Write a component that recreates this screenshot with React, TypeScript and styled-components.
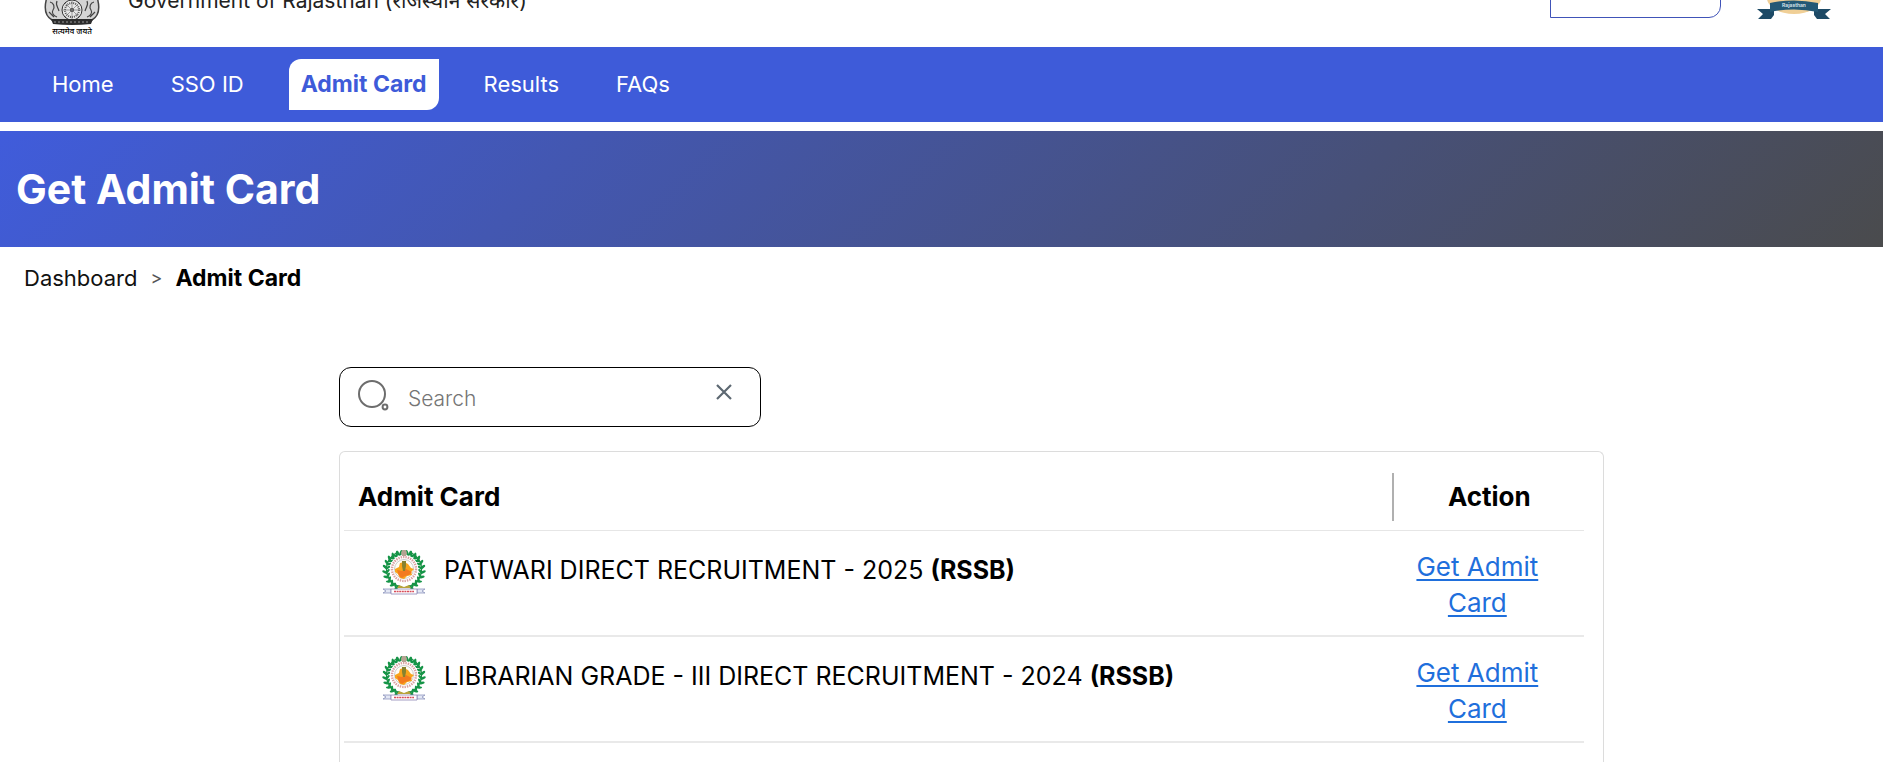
import React, { useState } from 'react';
import styled, { createGlobalStyle, css } from 'styled-components';

const GlobalStyle = createGlobalStyle`
  *, *::before, *::after { box-sizing: border-box; }
  body { margin: 0; background: #fff; color: #000; font-family: Inter, "Noto Sans", sans-serif; }
`;

const Page = styled.div`
  display: flex;
  flex-direction: column;
  height: 100vh;
  overflow: hidden;
`;

const Header = styled.header`
  display: flex;
  align-items: flex-end;
  flex: none;
  height: 47px;
  padding: 0 52px 0 44px;
  overflow: hidden;
`;

const Emblem = styled.div`
  display: flex;
  flex-direction: column;
  align-items: center;
  width: 56px;
  padding-bottom: 10px;
  svg { display: block; }
`;

const Motto = styled.span`
  font-family: "Noto Sans", "Liberation Serif", serif;
  font-size: 8px;
  font-weight: 500;
  line-height: 12px;
  white-space: nowrap;
`;

const Government = styled.span`
  margin-left: 28px;
  padding-bottom: 32px;
  color: #222;
  font-size: 21px;
  line-height: 28px;
  white-space: nowrap;
`;

const HeaderButton = styled.button`
  width: 171px;
  height: 52px;
  margin: 0 36px 29px auto;
  border: 1px solid #4053b8;
  border-radius: 12px 0;
  background: #fff;
`;

const StateLogo = styled.svg`
  display: block;
  flex: none;
  margin-bottom: 28px;
`;

const Nav = styled.nav`
  display: flex;
  align-items: center;
  flex: none;
  gap: 33px;
  height: 75px;
  padding: 0 40px;
  background: #3e5bd9;
`;

const NavLink = styled.a<{ $active?: boolean }>`
  padding: 0 12px;
  border-radius: 12px 0;
  color: #fff;
  font-size: 22px;
  line-height: 51px;
  text-decoration: none;
  white-space: nowrap;
  ${(p) => p.$active && css`
    background: #fff;
    color: #3e5bd9;
    font-size: 23px;
    font-weight: 700;
  `}
`;

const Banner = styled.section`
  display: flex;
  align-items: center;
  flex: none;
  height: 116px;
  margin-top: 9px;
  padding: 0 16px;
  background: linear-gradient(135deg, #405cdb, #4a4b4d);
`;

const Title = styled.h1`
  margin: 0;
  color: #fff;
  font-size: 41px;
  line-height: 48px;
`;

const Breadcrumb = styled.nav`
  display: flex;
  align-items: center;
  flex: none;
  gap: 13px;
  padding: 16px 24px;
  font-size: 23px;
  line-height: 30px;
  a { color: #111; font-size: 22px; text-decoration: none; }
  span { color: #555; font-size: 18px; }
`;

const Content = styled.main`
  display: flex;
  flex-direction: column;
  flex: 1;
  margin: 58px 14.8% 0 18%;
`;

const SearchBox = styled.div`
  display: flex;
  align-items: center;
  flex: none;
  width: 422px;
  height: 60px;
  padding: 0 24px 0 18px;
  border: 1px solid #000;
  border-radius: 12px;
`;

const SearchInput = styled.input`
  flex: 1;
  min-width: 0;
  margin-left: 18px;
  padding: 2px 0 0;
  border: 0;
  outline: 0;
  background: none;
  font-family: inherit;
  font-size: 21px;
  font-weight: 300;
  &::placeholder { color: #757575; opacity: 1; }
`;

const ClearButton = styled.button`
  padding: 4px;
  margin-bottom: 10px;
  border: 0;
  background: none;
  svg { display: block; }
`;

const Card = styled.section`
  flex: 1;
  margin-top: 24px;
  padding: 21px 19px 0 4px;
  border: 1px solid #dcdcdc;
  border-bottom: 0;
  border-radius: 6px 6px 0 0;
`;

const Table = styled.table`
  width: 100%;
  border-collapse: separate;
  border-spacing: 0;
  font-size: 25px;
`;

const HeadCell = styled.th<{ $action?: boolean }>`
  width: ${(p) => (p.$action ? '192px' : 'auto')};
  padding: 0 0 9px;
  border-bottom: 1px solid #e6e6e6;
  font-size: 26px;
  text-align: left;
`;

const HeadLabel = styled.div<{ $divided?: boolean }>`
  height: 48px;
  padding-left: 14px;
  line-height: 48px;
  ${(p) => p.$divided && css`
    padding-left: 0;
    border-left: 2px solid #b0b0b0;
    text-align: center;
  `}
`;

const Cell = styled.td`
  height: 106px;
  padding: 18px 0 0 38px;
  border-bottom: 2px solid #e9e9e9;
  vertical-align: top;
`;

const ActionCell = styled(Cell)`
  padding: 18px 42px 0 20px;
  font-size: 26px;
  line-height: 36px;
  text-align: center;
  a {
    color: #1f6fdc;
    text-decoration-thickness: 2px;
    text-underline-offset: 3px;
  }
`;

const Exam = styled.div`
  display: flex;
  align-items: flex-start;
  gap: 18px;
  line-height: 42px;
  svg { display: block; flex: none; }
`;

const NationalEmblem = () => (
  <svg width="56" height="60" viewBox="0 0 56 60" aria-hidden="true">
    <path d="M8 0h40v30H8z" fill="#f2f2f2" />
    <path d="M3 32C0 42 1 51 8 55h40c7-4 8-13 5-23z" fill="#d4d4d4" stroke="#444" strokeWidth="1.5" />
    <circle cx="28" cy="45" r="10" fill="#e8e8e8" stroke="#333" />
    <circle cx="28" cy="45" r="7" fill="none" stroke="#555" strokeWidth="2" strokeDasharray="1 1" />
    <circle cx="28" cy="45" r="2" fill="#333" />
    <path d="M28 35v20M18 45h20M21 38l14 14M35 38L21 52" stroke="#777" strokeWidth=".7" />
    <path d="M6 37c4 1 5 5 3 8s1 6 4 7M13 36c-2 4 1 6 2 10M50 37c-4 1-5 5-3 8s-1 6-4 7M43 36c2 4-1 6-2 10M5 47l5 5M51 47l-5 5" fill="none" stroke="#444" strokeWidth="1.2" />
    <path d="M7 54h42l-2 5q-19 2-38 0z" fill="#2c2c2c" />
    <path d="M10 57h36" stroke="#999" strokeDasharray="2 2" />
  </svg>
);

const leaves = Array.from({ length: 11 }, (_, i) => 16 + i * 14);

const BoardSeal = () => (
  <svg width="44" height="46" viewBox="0 0 44 46" aria-hidden="true">
    {[1, -1].map((side) => (
      <g key={side} transform={side === 1 ? undefined : 'translate(44 0) scale(-1 1)'}>
        <path d="M17 3A18 18 0 0 0 20 38" fill="none" stroke="#278a45" strokeWidth="1.2" />
        {leaves.map((a) => {
          const r = (a * Math.PI) / 180;
          const x = 22 - 17.5 * Math.sin(r);
          const y = 20.5 - 17.5 * Math.cos(r);
          return (
            <g key={a} fill="#159447">
              <ellipse cx={x - 1.8 * Math.sin(r)} cy={y - 1.8 * Math.cos(r)} rx="3" ry="1.3" transform={`rotate(${125 - a} ${x} ${y})`} />
              <ellipse cx={x + 1.6 * Math.sin(r)} cy={y + 1.6 * Math.cos(r)} rx="2.7" ry="1.2" transform={`rotate(${55 - a} ${x} ${y})`} />
            </g>
          );
        })}
      </g>
    ))}
    <circle cx="22" cy="20" r="14" fill="#fff" />
    <circle cx="22" cy="20" r="12" fill="none" stroke="#d9a0a0" strokeWidth="2.4" strokeDasharray="1.4 1" />
    <circle cx="22" cy="20" r="9.5" fill="#fffdf5" stroke="#aaa" strokeWidth=".6" />
    <path d="M19 4l1-3h4l1 3-1 3h-4z" fill="#b4a392" />
    <path d="M13 20l4-2 1-4 4-1 4 2 3 4 3 1-3 3 1 3-5 1-3 3-4-1-2-4-3-2z" fill="#f9a51b" />
    <path d="M15 21l5 1 4-2 6 3-3 3-4 1-3 2-3-2z" fill="#f37a1f" />
    <path d="M20 12h4v5l-1 5h-2l-1-5z" fill="#87822f" />
    <path d="M17 36l5 2 5-2 2 3H15z" fill="#b9a33c" />
    <path d="M1 40h8v4H1l3-2zM43 40h-8v4h8l-3-2z" fill="#e3e7f4" stroke="#8088b5" strokeWidth=".7" />
    <path d="M9 40h26v5H9z" fill="#fff" stroke="#8d86b4" strokeWidth=".8" />
    <path d="M12 42.5h20" stroke="#d84d5a" strokeWidth="1.6" strokeDasharray="2 .6" />
  </svg>
);

const exams = [
  'PATWARI DIRECT RECRUITMENT - 2025',
  'LIBRARIAN GRADE - III DIRECT RECRUITMENT - 2024',
];

export default function App() {
  const [query, setQuery] = useState('');
  return (
    <Page>
      <GlobalStyle />
      <Header>
        <Emblem>
          <NationalEmblem />
          <Motto>सत्यमेव जयते</Motto>
        </Emblem>
        <Government>Government of Rajasthan (राजस्थान सरकार)</Government>
        <HeaderButton type="button" aria-label="Account" />
        <StateLogo width="74" height="40" viewBox="0 0 74 40" role="img" aria-label="Rajasthan">
          <ellipse cx="37" cy="19" rx="27" ry="16" fill="#f0cf96" />
          <path d="M0 30h14l3-3v9l-3 4H1l5-5zM74 30H60l-3-3v9l3 4h13l-5-5z" fill="#1d4a66" />
          <path d="M13 24q24-5 48 0v9q-24-5-48 0z" fill="#235875" />
          <text x="37" y="28" fill="#dfe8ee" fontSize="5" fontWeight="600" textAnchor="middle">Rajasthan</text>
        </StateLogo>
      </Header>
      <Nav>
        <NavLink href="#home">Home</NavLink>
        <NavLink href="#sso">SSO ID</NavLink>
        <NavLink href="#admit-card" $active>Admit Card</NavLink>
        <NavLink href="#results">Results</NavLink>
        <NavLink href="#faqs">FAQs</NavLink>
      </Nav>
      <Banner><Title>Get Admit Card</Title></Banner>
      <Breadcrumb aria-label="Breadcrumb">
        <a href="#dashboard">Dashboard</a>
        <span>&gt;</span>
        <strong>Admit Card</strong>
      </Breadcrumb>
      <Content>
        <SearchBox>
          <svg width="32" height="34" viewBox="0 0 32 34" fill="none" stroke="#6d6d6d" strokeWidth="2" aria-hidden="true">
            <circle cx="14" cy="14" r="13" />
            <circle cx="27" cy="27" r="2.4" />
          </svg>
          <SearchInput aria-label="Search" placeholder="Search" value={query} onChange={(e) => setQuery(e.target.value)} />
          <ClearButton type="button" aria-label="Clear search" onClick={() => setQuery('')}>
            <svg width="16" height="16" viewBox="0 0 16 16" stroke="#5d6872" strokeWidth="2.2" aria-hidden="true">
              <path d="M1 1l14 14M15 1L1 15" />
            </svg>
          </ClearButton>
        </SearchBox>
        <Card>
          <Table>
            <thead>
              <tr>
                <HeadCell scope="col"><HeadLabel>Admit Card</HeadLabel></HeadCell>
                <HeadCell scope="col" $action><HeadLabel $divided>Action</HeadLabel></HeadCell>
              </tr>
            </thead>
            <tbody>
              {exams.map((name) => (
                <tr key={name}>
                  <Cell>
                    <Exam>
                      <BoardSeal />
                      <span>{name} <strong>(RSSB)</strong></span>
                    </Exam>
                  </Cell>
                  <ActionCell><a href="#get">Get Admit Card</a></ActionCell>
                </tr>
              ))}
            </tbody>
          </Table>
        </Card>
      </Content>
    </Page>
  );
}
